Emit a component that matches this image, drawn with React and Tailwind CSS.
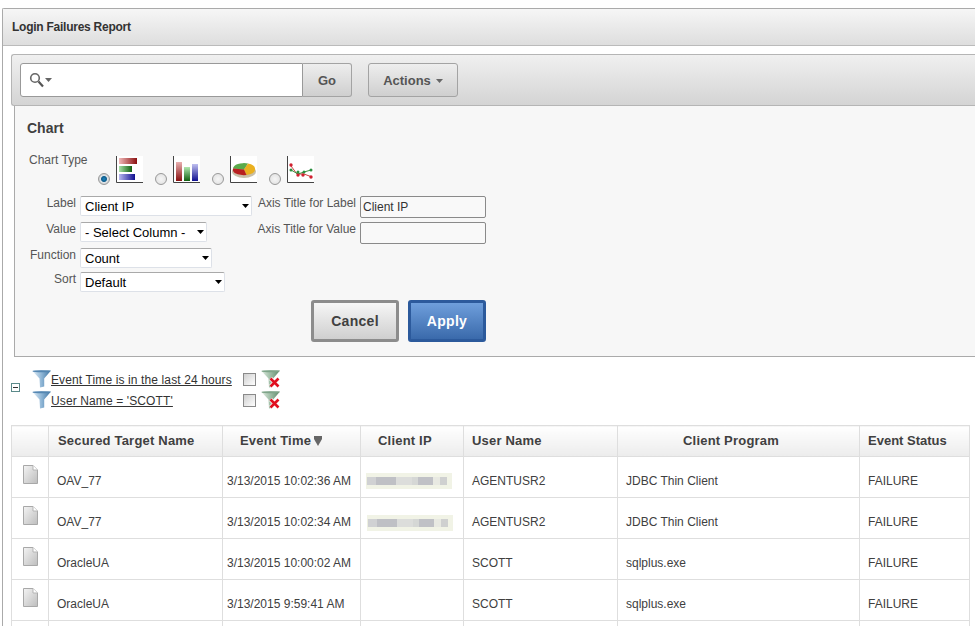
const font = { fontFamily: '"Liberation Sans", Arial, sans-serif' };

function Triangle({ className }) {
  return (
    <svg width="7" height="4" viewBox="0 0 7 4" className={className}>
      <path d="M0 0h7L3.5 4z" fill="currentColor" />
    </svg>
  );
}

function HBarIcon() {
  return (
    <svg width="27" height="27" viewBox="0 0 27 27" className="block">
      <defs>
        <linearGradient id="hr"><stop offset="0" stopColor="#f0b8b8" /><stop offset="1" stopColor="#8a1010" /></linearGradient>
        <linearGradient id="hg"><stop offset="0" stopColor="#a8e0a8" /><stop offset="1" stopColor="#106010" /></linearGradient>
        <linearGradient id="hb"><stop offset="0" stopColor="#b8b8f0" /><stop offset="1" stopColor="#101090" /></linearGradient>
      </defs>
      <rect width="27" height="27" fill="#fff" />
      <rect x="3" y="2" width="18" height="6" fill="url(#hr)" />
      <rect x="3" y="10" width="13" height="6" fill="url(#hg)" />
      <rect x="3" y="18" width="16" height="6" fill="url(#hb)" />
      <path d="M.5 0v26.5H27" fill="none" stroke="#444" />
    </svg>
  );
}

function VBarIcon() {
  return (
    <svg width="27" height="27" viewBox="0 0 27 27" className="block">
      <defs>
        <linearGradient id="vr" x2="0" y2="1"><stop offset="0" stopColor="#e8b0b0" /><stop offset="1" stopColor="#8a1010" /></linearGradient>
        <linearGradient id="vg" x2="0" y2="1"><stop offset="0" stopColor="#b0e8b0" /><stop offset="1" stopColor="#106010" /></linearGradient>
        <linearGradient id="vb" x2="0" y2="1"><stop offset="0" stopColor="#c0c0f0" /><stop offset="1" stopColor="#101090" /></linearGradient>
      </defs>
      <rect width="27" height="27" fill="#fff" />
      <rect x="3" y="6" width="6" height="19" fill="url(#vr)" />
      <rect x="11" y="11" width="6" height="14" fill="url(#vg)" />
      <rect x="19" y="8" width="6" height="17" fill="url(#vb)" />
      <path d="M.5 0v26.5H27" fill="none" stroke="#444" />
    </svg>
  );
}

function PieIcon() {
  return (
    <svg width="27" height="27" viewBox="0 0 27 27" className="block">
      <rect width="27" height="27" fill="#fff" />
      <ellipse cx="14" cy="15.5" rx="12" ry="6.5" fill="#9a8a60" opacity="0.55" />
      <path d="M3 12.5a11 5.5 0 0 1 15-5l-4 6z" fill="#5aaa4a" />
      <path d="M18 7.5a11 5.5 0 0 1 7 5v1.5a11 5.5 0 0 1-8.5 5L14 13.5z" fill="#eab020" />
      <path d="M3 12.5v2.5a11 5 0 0 0 13.5 4L14 13.5z" fill="#b82020" />
      <path d="M.5 0v26.5H27" fill="none" stroke="#444" />
    </svg>
  );
}

function LineIcon() {
  return (
    <svg width="27" height="27" viewBox="0 0 27 27" className="block">
      <rect width="27" height="27" fill="#fff" />
      <path d="M4 10l6 8 7 0 8 3" fill="none" stroke="#d04040" strokeWidth="1" />
      <path d="M4 14l7 4 6-2 7-2" fill="none" stroke="#409040" strokeWidth="1" />
      <g fill="#d02030">
        <circle cx="4" cy="9" r="1.7" /><circle cx="11" cy="19" r="1.7" /><circle cx="16" cy="19" r="1.7" /><circle cx="24" cy="21" r="1.7" />
      </g>
      <g fill="#2a9040">
        <circle cx="4" cy="14" r="1.5" /><circle cx="11" cy="16" r="1.5" /><circle cx="17" cy="16" r="1.5" /><circle cx="24" cy="14" r="1.5" />
      </g>
      <path d="M.5 0v26.5H27" fill="none" stroke="#444" />
    </svg>
  );
}

function Funnel({ id, muted }) {
  return (
    <svg width="19" height="18" viewBox="0 0 19 18" className="block shrink-0">
      <defs>
        <linearGradient id={id}>
          <stop offset="0" stopColor={muted ? "#e4eee4" : "#e8f1f8"} />
          <stop offset="0.5" stopColor={muted ? "#9dbda5" : "#8fb6d6"} />
          <stop offset="1" stopColor={muted ? "#5f8a6c" : "#3f75a4"} />
        </linearGradient>
      </defs>
      <path d="M0 .5h19L12.2 8.5V16.5L8 17.5 7.5 8.5z" fill={`url(#${id})`} />
      <ellipse cx="9.5" cy="1.2" rx="9" ry="1" fill={muted ? "#7fa58a" : "#5587b2"} />
    </svg>
  );
}

function RemoveFilter({ id }) {
  return (
    <div className="relative w-[19px] h-[18px] shrink-0">
      <Funnel id={id} muted />
      <svg width="13" height="13" viewBox="0 0 13 13" className="absolute -right-[1px] -bottom-[1px]">
        <path d="M2.5 2.5l8 8M10.5 2.5l-8 8" stroke="#fff" strokeWidth="4" />
        <path d="M2.5 2.5l8 8M10.5 2.5l-8 8" stroke="#e01020" strokeWidth="2.6" />
      </svg>
    </div>
  );
}

function Radio({ checked }) {
  return (
    <input
      type="radio"
      name="chart_type"
      defaultChecked={checked}
      className={
        "appearance-none block size-3 shrink-0 rounded-full border border-[#9a9a9a] mt-[17px] " +
        (checked
          ? "bg-[radial-gradient(circle,#1f86c0_0,#0d5c8c_35%,#dfe3e6_50%,#b8b8b8_100%)]"
          : "bg-[radial-gradient(circle,#f6f6f6_0,#e6e6e6_65%,#bcbcbc_100%)]")
      }
    />
  );
}

function Select({ value, width }) {
  return (
    <div className={"relative h-5 " + width}>
      <select
        defaultValue={value}
        style={font}
        className="appearance-none block w-full h-5 pl-1 bg-white text-[13px] leading-none text-black rounded-[2px] border border-[#dde1e8] border-t-[#a9a9a9] outline-none"
      >
        <option>{value}</option>
      </select>
      <Triangle className="absolute right-[3px] top-2 text-black" />
    </div>
  );
}

function FormRow({ label, children, className }) {
  return (
    <div className={"flex " + className}>
      <label className="w-[49px] text-right text-xs leading-[14px] text-[#555] mr-1 shrink-0 whitespace-nowrap">{label}</label>
      {children}
    </div>
  );
}

function AxisRow({ label, value }) {
  return (
    <div className="flex h-[22px]">
      <label className="w-[100px] text-right text-xs leading-[14px] text-[#555] mr-1 shrink-0 whitespace-nowrap">{label}</label>
      <input
        type="text"
        defaultValue={value}
        style={font}
        className="w-[126px] h-[22px] px-[2px] bg-[#f9f9f9] text-xs text-[#333] rounded-[2px] border border-[#8a8a8a] outline-none"
      />
    </div>
  );
}

// pixelated blur over the client ip
const blurBlocks = [
  ["w-[1px]", "bg-[#eef0e0]"], ["w-[9px]", "bg-[#d0d1d3]"], ["w-[20px]", "bg-[#bfc0c5]"], ["w-[16px]", "bg-[#dcdddb]"],
  ["w-[6px]", "bg-[#d5d7d5]"], ["w-[15px]", "bg-[#c0c1c6]"], ["w-[7px]", "bg-[#e8e9e2]"], ["w-[7px]", "bg-[#cfd0d0]"],
];

function BlurredIp({ className }) {
  return (
    <div className={"w-[86px] h-4 bg-[#f1f3e6] flex items-center " + className}>
      <div className="flex h-2 bg-[#eef0e0]">
        {blurBlocks.map(([w, bg], i) => (
          <div key={i} className={w + " " + bg} />
        ))}
      </div>
    </div>
  );
}

function DocIcon() {
  return (
    <svg width="15" height="19" viewBox="0 0 15 19" className="block ml-[11px] mt-[8px]">
      <defs>
        <linearGradient id={"doc"} x2="1" y2="1">
          <stop offset="0" stopColor="#f4f4f4" />
          <stop offset="1" stopColor="#bdbdbd" />
        </linearGradient>
      </defs>
      <path d="M.5.5h9.5l4.5 4.5v13.5H.5z" fill="url(#doc)" stroke="#a8a8a8" />
      <path d="M10 .5v4.5h4.5" fill="#fff" stroke="#b5b5b5" />
    </svg>
  );
}

const rows = [
  { target: "OAV_77", time: "3/13/2015 10:02:36 AM", ip: "mt-[-1px]", user: "AGENTUSR2", program: "JDBC Thin Client" },
  { target: "OAV_77", time: "3/13/2015 10:02:34 AM", ip: "mt-[1px] ml-[1px]", user: "AGENTUSR2", program: "JDBC Thin Client" },
  { target: "OracleUA", time: "3/13/2015 10:00:02 AM", user: "SCOTT", program: "sqlplus.exe" },
  { target: "OracleUA", time: "3/13/2015 9:59:41 AM", user: "SCOTT", program: "sqlplus.exe" },
  { target: "", time: "", user: "", program: "" },
];

const thClass = "border border-[#dedede] text-[13px] font-bold text-[#404040] text-left h-[31px] p-0 bg-gradient-to-b from-white to-[#ececec]";
const tdClass = "border border-[#dedede] text-xs text-[#404040] pt-[8px] pb-0 pr-0 align-middle whitespace-nowrap overflow-hidden";

export default function App() {
  return (
    <div style={font} className="h-[626px] w-[975px] overflow-hidden bg-white pt-2 pl-[2px]">
      <div className="border-l border-t border-[#aaa] h-[700px] rounded-tl-[2px]">
        <div className="h-[37px] flex items-center pl-[9px] border-b border-[#bbb] bg-gradient-to-b from-[#f6f6f6] to-[#dedede]">
          <h1 className="text-xs font-bold text-[#333] tracking-[-0.25px]">Login Failures Report</h1>
        </div>

        <div className="pt-2 pl-2">
          <div className="h-[52px] flex items-center pl-2 gap-4 rounded-tl-[3px] rounded-bl-[3px] border border-r-0 border-[#b5b5b5] bg-gradient-to-b from-[#f0f0f0] to-[#d4d4d4]">
            <div className="flex h-[34px]">
              <div className="w-[283px] flex items-center pl-2 gap-[1px] bg-white border border-[#999] rounded-l-[3px]">
                <svg width="15" height="16" viewBox="0 0 15 16" className="block">
                  <circle cx="6" cy="6" r="4.3" fill="none" stroke="#666" strokeWidth="1.6" />
                  <path d="M9.5 9.5l4.5 5" stroke="#555" strokeWidth="2.2" />
                </svg>
                <Triangle className="text-[#666]" />
              </div>
              <button style={font} className="w-[49px] pt-[1px] text-[13px] font-bold text-[#555] border border-l-0 border-[#a3a3a3] rounded-r-[3px] bg-gradient-to-b from-[#eeeeee] to-[#cfcfcf]">Go</button>
            </div>
            <button style={font} className="w-[90px] h-[34px] pt-[1px] flex items-center justify-center gap-[5px] text-[13px] font-bold text-[#555] border border-[#a3a3a3] rounded-[3px] bg-gradient-to-b from-[#eeeeee] to-[#cfcfcf]">
              Actions
              <Triangle className="text-[#666]" />
            </button>
          </div>

          <div className="ml-[3px] h-[251px] pt-[14px] pl-[12px] bg-[#f7f7f7] border-l border-b border-[#aaa]">
            <h2 className="text-sm leading-4 font-bold text-[#404040]">Chart</h2>

            <div className="flex mt-[20px] h-[40px] ml-[2px]">
              <label className="w-[69px] text-xs leading-[14px] text-[#555] shrink-0 mt-[-3px]">Chart Type</label>
              <div className="flex gap-[12px]">
                <div className="flex gap-[6px] items-start"><Radio checked /><HBarIcon /></div>
                <div className="flex gap-[6px] items-start"><Radio /><VBarIcon /></div>
                <div className="flex gap-[6px] items-start"><Radio /><PieIcon /></div>
                <div className="flex gap-[6px] items-start"><Radio /><LineIcon /></div>
              </div>
            </div>

            <div className="flex">
              <div className="w-[228px] shrink-0">
                <FormRow label="Label" className="h-[26px]"><Select value="Client IP" width="w-[172px]" /></FormRow>
                <FormRow label="Value" className="h-[26px]"><Select value="- Select Column -" width="w-[127px]" /></FormRow>
                <FormRow label="Function" className="h-[24px]"><Select value="Count" width="w-[132px]" /></FormRow>
                <FormRow label="Sort" className="h-[20px]"><Select value="Default" width="w-[145px]" /></FormRow>
              </div>
              <div className="flex flex-col gap-1 ml-[1px]">
                <AxisRow label="Axis Title for Label" value="Client IP" />
                <AxisRow label="Axis Title for Value" value="" />
              </div>
            </div>

            <div className="flex gap-[9px] ml-[284px] mt-2">
              <button style={font} className="w-[88px] h-[42px] text-sm tracking-[0.3px] font-bold text-[#404040] rounded-[3px] border-[3px] border-[#8c8c8c] bg-gradient-to-b from-[#f6f6f6] to-[#cfcfcf]">Cancel</button>
              <button style={font} className="w-[78px] h-[42px] text-sm tracking-[0.3px] font-bold text-white rounded-[3px] border-[3px] border-[#2c5a9c] bg-gradient-to-b from-[#6f9fdc] to-[#3a6aab]">Apply</button>
            </div>
          </div>

          <div className="relative h-[68px]">
            <div className="absolute left-0 top-[26px] size-[9px] border border-[#5b8a8a] flex items-center justify-center">
              <div className="w-[5px] h-px bg-[#333]" />
            </div>
            <div className="flex flex-col pl-[21px] pt-[13px] gap-[3px]">
              <div className="flex h-[18px] items-start">
                <Funnel id="f1" />
                <a className="w-[192px] text-xs tracking-[0.12px] leading-[20px] text-[#333] underline whitespace-nowrap">Event Time is in the last 24 hours</a>
                <input type="checkbox" className="appearance-none block size-[13px] mt-[3px] mr-[5px] border border-[#8a8a8a] bg-gradient-to-br from-[#d0d0d0] to-white" />
                <RemoveFilter id="r1" />
              </div>
              <div className="flex h-[18px] items-start">
                <Funnel id="f2" />
                <a className="w-[192px] text-xs tracking-[0.12px] leading-[20px] text-[#333] underline whitespace-nowrap">User Name = 'SCOTT'</a>
                <input type="checkbox" className="appearance-none block size-[13px] mt-[3px] mr-[5px] border border-[#8a8a8a] bg-gradient-to-br from-[#d0d0d0] to-white" />
                <RemoveFilter id="r2" />
              </div>
            </div>
          </div>

          <table className="table-fixed border-collapse w-[958px]">
            <colgroup>
              <col className="w-[37px]" />
              <col className="w-[174px]" />
              <col className="w-[138px]" />
              <col className="w-[103px]" />
              <col className="w-[154px]" />
              <col className="w-[242px]" />
              <col className="w-[110px]" />
            </colgroup>
            <thead>
              <tr>
                <th className={thClass}></th>
                <th className={thClass + " pl-[9px] tracking-[0.2px]"}>Secured Target Name</th>
                <th className={thClass + " pl-[17px] tracking-[0.2px]"}>
                  Event Time
                  <svg width="8" height="10" viewBox="0 0 8 10" className="inline-block ml-[3px] mb-[2px]">
                    <path d="M0 0h8v3L4 10 0 3z" fill="#666" />
                  </svg>
                </th>
                <th className={thClass + " pl-[17px] tracking-[0.2px]"}>Client IP</th>
                <th className={thClass + " pl-2 tracking-[0.2px]"}>User Name</th>
                <th className={thClass + " pl-[65px] tracking-[0.2px]"}>Client Program</th>
                <th className={thClass + " pl-2"}>Event Status</th>
              </tr>
            </thead>
            <tbody>
              {rows.map((row, i) => (
                <tr key={i} className="h-[41px]">
                  <td className="border border-[#dedede] p-0 align-top">{row.target && <DocIcon />}</td>
                  <td className={tdClass + " pl-2"}>{row.target}</td>
                  <td className={tdClass + " pl-1"}>{row.time}</td>
                  <td className={tdClass + " pl-[5px]"}>{row.ip && <BlurredIp className={row.ip} />}</td>
                  <td className={tdClass + " pl-2"}>{row.user}</td>
                  <td className={tdClass + " pl-2"}>{row.program}</td>
                  <td className={tdClass + " pl-2"}>{row.target && "FAILURE"}</td>
                </tr>
              ))}
            </tbody>
          </table>
        </div>
      </div>
    </div>
  );
}
